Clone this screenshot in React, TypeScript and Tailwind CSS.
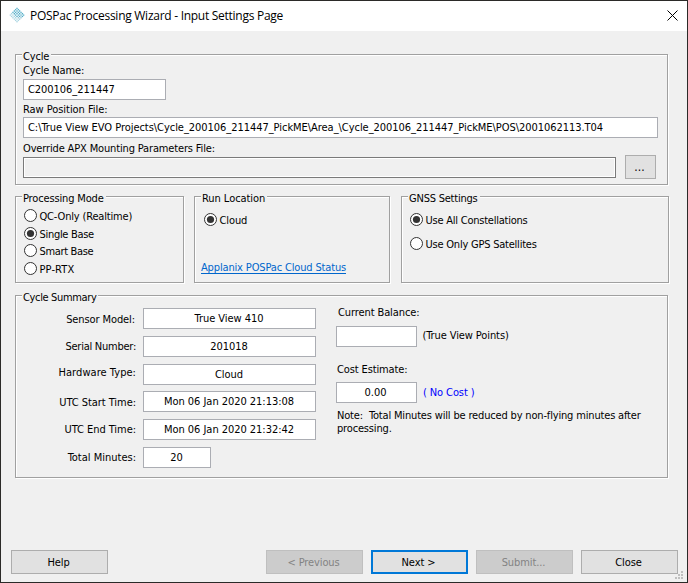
import type { ReactNode } from "react";
import clsx from "clsx";

type GroupBoxProps = { title: string; className?: string; titleClassName?: string; children: ReactNode };

function GroupBox({ title, className, titleClassName, children }: GroupBoxProps) {
  return (
    <section
      className={clsx(
        "relative border border-[#a0a0a0] shadow-[1px_1px_0_#fff,inset_1px_1px_0_#fff]",
        className,
      )}
    >
      <h2
        className={clsx("absolute -top-[5px] left-[6px] bg-[#f0f0f0] pl-px pr-[2px]", titleClassName)}
      >
        {title}
      </h2>
      {children}
    </section>
  );
}

function Field({ value, className }: { value?: string; className?: string }) {
  return (
    <div className={clsx("flex h-[21px] shrink-0 items-center border border-[#abadb3] bg-white px-1", className)}>
      {value}
    </div>
  );
}

type RadioProps = { label: string; checked?: boolean; className?: string };

function Radio({ label, checked, className }: RadioProps) {
  return (
    <label className={clsx("flex h-[13px] items-start", className)}>
      <svg className="size-[13px] shrink-0" viewBox="0 0 13 13">
        <circle cx="6.5" cy="6.5" r="6" fill="#fff" stroke="#333" strokeWidth="1" />
        {checked && <circle cx="6.5" cy="6.5" r="3.6" fill="#333" />}
      </svg>
      <span className="ml-[2.5px] mt-px">{label}</span>
    </label>
  );
}

type ButtonProps = { label: string; variant?: "normal" | "primary" | "disabled"; className?: string };

function Button({ label, variant = "normal", className }: ButtonProps) {
  return (
    <button
      disabled={variant === "disabled"}
      className={clsx(
        "flex h-6 w-[97px] shrink-0 items-center justify-center pr-[2px] tracking-[-0.1px]",
        variant === "normal" && "border border-[#adadad] bg-[#e1e1e1]",
        variant === "primary" && "border-2 border-[#0078d7] bg-[#e1e1e1]",
        variant === "disabled" && "border border-[#bfbfbf] bg-[#cccccc] text-[#838383]",
        className,
      )}
    >
      {label}
    </button>
  );
}

const cells = Array.from({ length: 36 }, (_, i) => ({ col: i % 6, row: Math.floor(i / 6) }));

function AppIcon() {
  return (
    <svg className="mb-[2px] size-4" viewBox="0 0 16 16">
      <g transform="translate(8 0) rotate(45)">
        {cells.map(({ col, row }) => (
          <rect
            key={`${col}-${row}`}
            x={col * 1.9 + 0.3}
            y={row * 1.9 + 0.3}
            width="1.3"
            height="1.3"
            fill={row > 3 ? "#a5d3e0" : col + row > 6 ? "#8fc3d4" : "#47a8c4"}
          />
        ))}
      </g>
    </svg>
  );
}

const summary = [
  { label: "Sensor Model:", value: "True View 410", labelClass: "mt-[5px] mr-px tracking-[-0.1px]", rowClass: "h-7" },
  { label: "Serial Number:", value: "201018", labelClass: "mt-1 tracking-[-0.25px]", rowClass: "h-7" },
  { label: "Hardware Type:", value: "Cloud", labelClass: "mt-[2px] tracking-[0.05px]", rowClass: "h-[27px]" },
  { label: "UTC Start Time:", value: "Mon 06 Jan 2020 21:13:08", labelClass: "mt-[5px] tracking-[-0.05px]", rowClass: "h-7" },
  { label: "UTC End Time:", value: "Mon 06 Jan 2020 21:32:42", labelClass: "mt-1 tracking-[-0.05px]", rowClass: "h-7" },
  { label: "Total Minutes:", value: "20", labelClass: "mt-1", rowClass: "h-[21px]" },
];

const rawFile =
  "C:\\True View EVO Projects\\Cycle_200106_211447_PickME\\Area_\\Cycle_200106_211447_PickME\\POS\\2001062113.T04";

export default function App() {
  return (
    <div className="flex h-[583px] w-[688px] flex-col overflow-hidden whitespace-pre border border-[#2b2a28] bg-[#f0f0f0] font-['DejaVu_Sans_Condensed','DejaVu_Sans',sans-serif] text-[11px] leading-[13px] text-black">
      <header className="flex h-[30px] shrink-0 items-center bg-white pl-2">
        <AppIcon />
        <h1 className="ml-[5px] font-['Open_Sans',sans-serif] text-[12px] leading-4 tracking-[-0.27px]">
          POSPac Processing Wizard - Input Settings Page
        </h1>
        <svg className="mb-[2px] ml-auto mr-[9px] size-[11px]" viewBox="0 0 11 11" stroke="#000" strokeWidth="1">
          <path d="M.5.5l10 10M10.5.5l-10 10" />
        </svg>
      </header>

      <main className="px-[14px] pt-[23px]">
        <GroupBox title="Cycle" titleClassName="tracking-[-0.15px]" className="h-[131px] w-[653px] pl-[7px] pt-[9px]">
          <p className="tracking-[-0.15px]">Cycle Name:</p>
          <Field value="C200106_211447" className="mt-[2px] w-[143px] tracking-[-0.05px]" />
          <p className="mt-[3px] tracking-[-0.05px]">Raw Position File:</p>
          <Field value={rawFile} className="mt-px w-[635px] tracking-[-0.045px]" />
          <p className="mt-1 tracking-[-0.15px]">Override APX Mounting Parameters File:</p>
          <div className="flex items-start">
            <div className="mt-[2px] h-[21px] w-[593px] border border-[#7a7a7a] shadow-[inset_0_0_0_1px_#fff]" />
            <button className="ml-[9px] h-6 w-[31px] border border-[#adadad] bg-[#e1e1e1] pr-[2px] pt-px text-[12px]">...</button>
          </div>
        </GroupBox>

        <div className="mt-[11px] flex">
          <GroupBox
            title="Processing Mode"
            titleClassName="tracking-[-0.15px]"
            className="h-[87px] w-[169px] pl-2 pt-3"
          >
            <Radio label="QC-Only (Realtime)" className="tracking-[-0.17px]" />
            <Radio label="Single Base" checked className="mt-[5px] tracking-[-0.3px]" />
            <Radio label="Smart Base" className="mt-1 tracking-[-0.34px]" />
            <Radio label="PP-RTX" className="mt-[5px] tracking-[0.1px]" />
          </GroupBox>
          <GroupBox
            title="Run Location"
            titleClassName="tracking-[-0.05px]"
            className="ml-[10px] h-[87px] w-[196px] pl-[6px] pt-4"
          >
            <Radio label="Cloud" checked className="pl-[3px] tracking-[-0.1px]" />
            <a className="mt-9 flex w-[145px] border-b border-[#0066cc] leading-[11px] tracking-[-0.15px] text-[#0066cc]">
              Applanix POSPac Cloud Status
            </a>
          </GroupBox>
          <GroupBox
            title="GNSS Settings"
            titleClassName="tracking-[-0.22px]"
            className="ml-[11px] h-[87px] w-[268px] pl-2 pt-4"
          >
            <Radio label="Use All Constellations" checked className="tracking-[-0.23px]" />
            <Radio label="Use Only GPS Satellites" className="mt-[11px] tracking-[-0.22px]" />
          </GroupBox>
        </div>

        <GroupBox
          title="Cycle Summary"
          titleClassName="tracking-[-0.35px]"
          className="mt-3 flex h-[183px] w-[653px]"
        >
          <div className="w-[300px] pt-3">
            {summary.map(({ label, value, labelClass, rowClass }) => (
              <div key={label} className={clsx("flex items-start", rowClass)}>
                <div className="flex w-[120px] shrink-0 justify-end">
                  <span className={labelClass}>{label}</span>
                </div>
                <Field
                  value={value}
                  className={clsx(
                    "ml-[7px] justify-center pr-[5px] tracking-[-0.04px]",
                    label === "Total Minutes:" ? "w-[68px]" : "w-[173px]",
                  )}
                />
              </div>
            ))}
          </div>
          <div className="ml-5 pt-[10px]">
            <p className="pl-[2px] tracking-[-0.1px]">Current Balance:</p>
            <div className="mt-[7px] flex items-start">
              <Field className="w-[81px]" />
              <span className="ml-[5.5px] mt-[3px] tracking-[-0.1px]">(True View Points)</span>
            </div>
            <p className="mt-4 pl-px tracking-[-0.12px]">Cost Estimate:</p>
            <div className="mt-[6px] flex items-start">
              <Field value="0.00" className="w-[81px] justify-center pr-[6px]" />
              <span className="ml-[6px] mt-1 tracking-[-0.1px] text-[#0000ff]">( No Cost )</span>
            </div>
            <p className="mt-[6px] pl-px tracking-[-0.165px]">
              {"Note:  Total Minutes will be reduced by non-flying minutes after\nprocessing."}
            </p>
          </div>
        </GroupBox>
      </main>

      <footer className="mt-[72px] flex shrink-0 pl-[10px]">
        <Button label="Help" />
        <Button label="< Previous" variant="disabled" className="ml-[158px]" />
        <Button label="Next >" variant="primary" className="ml-2" />
        <Button label="Submit..." variant="disabled" className="ml-2" />
        <Button label="Close" className="ml-2" />
        <svg className="-ml-[3px] mt-[21px] h-2 w-2 shrink-0" viewBox="0 0 8 8" fill="#bfbfbf">
          <path d="M6 0h2v2h-2zM3 3h2v2h-2zM6 3h2v2h-2zM0 6h2v2h-2zM3 6h2v2h-2zM6 6h2v2h-2z" />
        </svg>
      </footer>
    </div>
  );
}
